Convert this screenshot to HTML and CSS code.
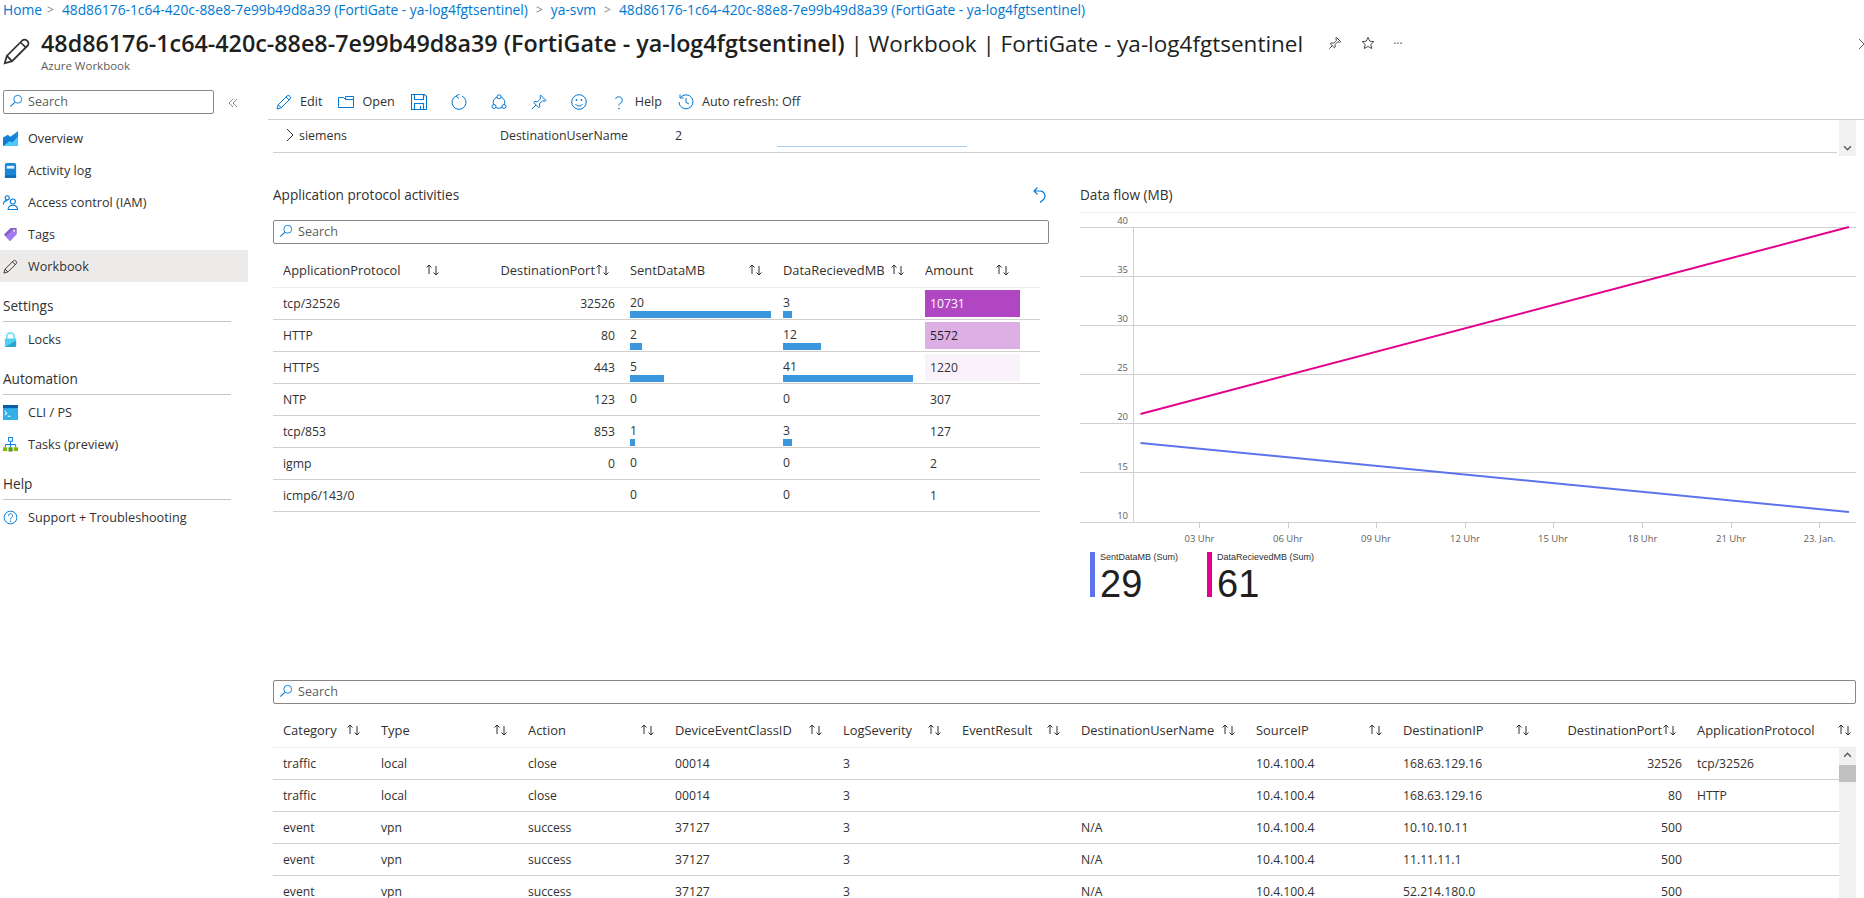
FILE: index.html
```html
<!DOCTYPE html>
<html lang="en">
<head>
  <meta charset="UTF-8">
  <meta name="viewport" content="width=device-width, initial-scale=1.0">
  <title>Workbook | FortiGate - ya-log4fgtsentinel</title>
  <link rel="stylesheet" href="styles.css">
</head>
<body>
  <svg class="sprite" aria-hidden="true">
    <symbol id="sort" viewBox="0 0 16 12"><path d="M4 10V1M1.5 3.5 4 1l2.5 2.5M11 2v9M8.5 8.5 11 11l2.5-2.5" fill="none" stroke="#323130"/></symbol>
    <symbol id="search" viewBox="0 0 16 16"><circle cx="10" cy="6" r="4.5" fill="none" stroke="#0078d4"/><path d="M6.500 9.500 1.500 14.500" stroke="#0078d4" stroke-width="1.200"/></symbol>
    <symbol id="pencil" viewBox="0 0 16 16"><path d="M1 15l1.200-4.200L11 2a1.800 1.800 0 0 1 2.600 0l.4.4a1.800 1.800 0 0 1 0 2.600L5.200 13.800zM2.200 10.800l3 3M10 3l3 3" fill="none" stroke="currentColor"/></symbol>
  </svg>

  <header class="page-header">
    <nav class="crumbs">
      <a class="crumb-home">Home</a><span class="crumb-sep">&gt;</span>
      <a>48d86176-1c64-420c-88e8-7e99b49d8a39 (FortiGate - ya-log4fgtsentinel)</a><span class="crumb-sep">&gt;</span>
      <a>ya-svm</a><span class="crumb-sep">&gt;</span>
      <a>48d86176-1c64-420c-88e8-7e99b49d8a39 (FortiGate - ya-log4fgtsentinel)</a>
    </nav>
    <div class="title-row">
      <svg class="title-icon"><use href="#pencil"/></svg>
      <div>
        <div class="title-line">
          <h1><b>48d86176-1c64-420c-88e8-7e99b49d8a39 (FortiGate - ya-log4fgtsentinel)</b> | Workbook | FortiGate - ya-log4fgtsentinel</h1>
          <svg class="title-action title-pin" viewBox="0 0 16 16"><path d="M9.500 1.500l5 5-1 .6-2.500-.4-3 3 .3 3-1 .8L2.700 8.900l.8-1 3 .3 3-3-.4-2.600zM5 11l-3.500 3.500" fill="none" stroke="#323130"/></svg>
          <svg class="title-action" viewBox="0 0 16 16"><path d="M8 1.500l2 4.400 4.700.5-3.500 3.200 1 4.700L8 11.900l-4.200 2.400 1-4.700L1.300 6.400 6 5.900z" fill="none" stroke="#323130"/></svg>
          <span class="title-more">···</span>
        </div>
        <div class="subtitle">Azure Workbook</div>
      </div>
      <svg class="title-close" viewBox="0 0 12 12"><path d="M1 1l10 10M1 11 11 1" stroke="#605e5c"/></svg>
    </div>
  </header>

  <div class="layout">
    <aside class="sidebar">
      <div class="search-box side-search">
        <svg class="search-icon"><use href="#search"/></svg>Search
      </div>
      <svg class="collapse" viewBox="0 0 10 10"><path d="M5 1 1 5l4 4M9 1 5 5l4 4" fill="none" stroke="#8a8886"/></svg>

      <ul class="nav">
        <li class="nav-item">
          <svg class="nav-icon" viewBox="0 0 16 16"><defs><linearGradient id="ov" x1="0" y1="0" x2="0" y2="1"><stop offset="0" stop-color="#1b93eb"/><stop offset="1" stop-color="#0a6fc4"/></linearGradient></defs><path d="M0 16V7l5-3 3 2 8-6v16z" fill="url(#ov)"/><path d="M0 16l7-5 3 1 6-6v10z" fill="#50c7f5"/></svg>
          Overview
        </li>
        <li class="nav-item">
          <svg class="nav-icon" viewBox="0 0 16 16"><rect x="2" y="0" width="12" height="16" rx="2" fill="#1a85d6"/><rect x="4" y="3" width="8" height="3" fill="#e8f4fd"/><rect x="2" y="13" width="12" height="3" rx="1" fill="#0f6cb8"/></svg>
          Activity log
        </li>
        <li class="nav-item">
          <svg class="nav-icon" viewBox="0 0 16 16"><g fill="none" stroke="#0078d4" stroke-width="1.100"><circle cx="4.500" cy="3" r="2.200"/><path d="M.5 10c0-3 1.500-4 4-4"/><circle cx="10.500" cy="7" r="2.700"/><path d="M5.500 15.500c0-3 2-4.500 5-4.500s5 1.500 5 4.500z"/></g></svg>
          Access control (IAM)
        </li>
        <li class="nav-item">
          <svg class="nav-icon" viewBox="0 0 16 16"><path d="M1 8l7-7h6.500v6.500l-7 7.500z" fill="#8661c5"/><path d="M3 10l9-8.500 2.500 6-7 7.500z" fill="#a67af4"/><circle cx="12" cy="4" r="1" fill="#fff"/></svg>
          Tags
        </li>
        <li class="nav-item is-active">
          <svg class="nav-icon nav-pencil"><use href="#pencil"/></svg>
          Workbook
        </li>
      </ul>

      <h2 class="nav-heading">Settings</h2>
      <ul class="nav">
        <li class="nav-item">
          <svg class="nav-icon" viewBox="0 0 16 16"><path d="M4 8V5a4 4 0 0 1 8 0v3" fill="none" stroke="#7fe0fa" stroke-width="2"/><rect x="2" y="7" width="12" height="9" rx="1" fill="#50d0f5"/><path d="M2 16l12-7v6a1 1 0 0 1-1 1z" fill="#2aa5cf"/></svg>
          Locks
        </li>
      </ul>

      <h2 class="nav-heading">Automation</h2>
      <ul class="nav">
        <li class="nav-item">
          <svg class="nav-icon" viewBox="0 0 16 12" preserveAspectRatio="none"><rect width="16" height="12" fill="#32b0e7"/><rect width="16" height="2.500" fill="#0a5ea8"/><path d="M2 5l2 1.500L2 8M5 9h3" fill="none" stroke="#fff" stroke-width=".9"/></svg>
          CLI / PS
        </li>
        <li class="nav-item">
          <svg class="nav-icon" viewBox="0 0 16 16"><rect x="6" y=".5" width="4" height="4" fill="#fff" stroke="#0078d4"/><path d="M8 4.500V8M2.500 11V8h11v3M8 8v3" fill="none" stroke="#0078d4"/><rect x="0" y="11" width="4.500" height="4" fill="#7fba00"/><rect x="5.800" y="11" width="4.500" height="4.500" fill="#5e9624"/><rect x="11.500" y="11" width="4.500" height="4" fill="#7fba00"/></svg>
          Tasks (preview)
        </li>
      </ul>

      <h2 class="nav-heading">Help</h2>
      <ul class="nav">
        <li class="nav-item">
          <svg class="nav-icon" viewBox="0 0 16 16"><circle cx="8" cy="8" r="6.800" fill="none" stroke="#0078d4"/><path d="M5.800 6.200a2.200 2.200 0 1 1 3.400 1.800c-.8.500-1.200 1-1.200 2" fill="none" stroke="#0078d4"/><circle cx="8" cy="12" r=".7" fill="#0078d4"/></svg>
          Support + Troubleshooting
        </li>
      </ul>
    </aside>

    <main class="main">
      <div class="toolbar">
        <span class="tool"><svg class="tool-icon"><use href="#pencil"/></svg>Edit</span>
        <span class="tool"><svg class="tool-icon" viewBox="0 0 16 16"><path d="M.5 13.500v-10h5l2 2H15.500v8zM7.500 5.500V2.500h8v3" fill="none" stroke="#0078d4"/></svg>Open</span>
        <span class="tool tool-only"><svg class="tool-icon" viewBox="0 0 16 16"><path d="M.5.500h13l2 2v13H.5zM3.500.5v5h9v-5M3.500 15.500v-6h9v6M9.500 12v3.500" fill="none" stroke="#0078d4" stroke-width="1.100"/></svg></span>
        <span class="tool tool-only"><svg class="tool-icon" viewBox="0 0 16 16"><path d="M5 2a7 7 0 1 0 6 0M8.500 0 5 2l3 2.500" fill="none" stroke="#0078d4"/></svg></span>
        <span class="tool tool-only"><svg class="tool-icon" viewBox="0 0 16 16"><g fill="none" stroke="#0078d4"><circle cx="8" cy="8.500" r="5.800"/><circle cx="8" cy="2.800" r="2" fill="#fff"/><circle cx="3" cy="12.500" r="2" fill="#fff"/><circle cx="13" cy="12.500" r="2" fill="#fff"/></g></svg></span>
        <span class="tool tool-only"><svg class="tool-icon" viewBox="0 0 16 16"><path d="M9.500 1l5.500 5.500-1 .7-2.500-.4-3 3 .3 3-1 .8L2.700 8.500l.8-1 3 .3 3-3-.4-2.600zM5 11l-4 4" fill="none" stroke="#0078d4"/></svg></span>
        <span class="tool tool-only"><svg class="tool-icon" viewBox="0 0 16 16"><circle cx="8" cy="8" r="7.300" fill="none" stroke="#0078d4"/><circle cx="5.500" cy="6" r=".9" fill="#0078d4"/><circle cx="10.500" cy="6" r=".9" fill="#0078d4"/><path d="M4.500 10a4 4 0 0 0 7 0" fill="none" stroke="#0078d4"/></svg></span>
        <span class="tool"><svg class="tool-icon" viewBox="0 0 16 16"><path d="M4.500 5a3.500 3.500 0 1 1 4.500 4.500c-.7.300-1 .8-1 2" fill="none" stroke="#0078d4"/><circle cx="8" cy="14.500" r=".8" fill="#0078d4"/></svg>Help</span>
        <span class="tool"><svg class="tool-icon" viewBox="0 0 16 16"><path d="M2.500 3.500A7 7 0 1 1 1 8M2 .5v3.500h3.500M8 4v4.500l3 1.500" fill="none" stroke="#0078d4"/></svg>Auto refresh: Off</span>
      </div>

      <div class="content">
        <div class="group-strip">
          <div class="group-row">
            <span class="group-name"><svg class="chevron" viewBox="0 0 8 14"><path d="M1 1l6 6-6 6" fill="none" stroke="#323130"/></svg>siemens</span>
            <span>DestinationUserName</span>
            <span>2</span>
            <span class="group-bar"></span>
          </div>
          <div class="strip-scroll"><svg class="scroll-arrow" viewBox="0 0 8 5"><path d="M1 1l3 3 3-3" fill="none" stroke="#605e5c" stroke-width="1.400"/></svg></div>
        </div>

        <div class="panels">
          <section class="panel">
            <div class="panel-title">
              <h3>Application protocol activities</h3>
              <svg class="undo" viewBox="0 0 14 17"><path d="M1 5h6.500a5 5 0 0 1 3 8.500L7 16.500M4.500 1.500 1 5l3.500 3.500" fill="none" stroke="#0078d4" stroke-width="1.100"/></svg>
            </div>
            <div class="search-box"><svg class="search-icon"><use href="#search"/></svg>Search</div>

            <div class="grid-row protocol-cols grid-head">
              <span class="th">ApplicationProtocol<svg class="sort"><use href="#sort"/></svg></span>
              <span class="th th-end">DestinationPort<svg class="sort"><use href="#sort"/></svg></span>
              <span class="th">SentDataMB<svg class="sort"><use href="#sort"/></svg></span>
              <span class="th">DataRecievedMB<svg class="sort"><use href="#sort"/></svg></span>
              <span class="th">Amount<svg class="sort"><use href="#sort"/></svg></span>
            </div>

            <div class="grid-row protocol-cols">
              <span class="td">tcp/32526</span><span class="td td-num">32526</span>
              <span class="td td-bar">20<i class="bar" style="width:141px"></i></span>
              <span class="td td-bar">3<i class="bar" style="width:9px"></i></span>
              <span class="td-heat heat-high">10731</span>
            </div>
            <div class="grid-row protocol-cols">
              <span class="td">HTTP</span><span class="td td-num">80</span>
              <span class="td td-bar">2<i class="bar" style="width:12px"></i></span>
              <span class="td td-bar">12<i class="bar" style="width:38px"></i></span>
              <span class="td-heat heat-mid">5572</span>
            </div>
            <div class="grid-row protocol-cols">
              <span class="td">HTTPS</span><span class="td td-num">443</span>
              <span class="td td-bar">5<i class="bar" style="width:34px"></i></span>
              <span class="td td-bar">41<i class="bar" style="width:130px"></i></span>
              <span class="td-heat heat-low">1220</span>
            </div>
            <div class="grid-row protocol-cols">
              <span class="td">NTP</span><span class="td td-num">123</span>
              <span class="td td-bar">0</span><span class="td td-bar">0</span><span class="td-heat">307</span>
            </div>
            <div class="grid-row protocol-cols">
              <span class="td">tcp/853</span><span class="td td-num">853</span>
              <span class="td td-bar">1<i class="bar" style="width:5px"></i></span>
              <span class="td td-bar">3<i class="bar" style="width:9px"></i></span>
              <span class="td-heat">127</span>
            </div>
            <div class="grid-row protocol-cols">
              <span class="td">igmp</span><span class="td td-num">0</span>
              <span class="td td-bar">0</span><span class="td td-bar">0</span><span class="td-heat">2</span>
            </div>
            <div class="grid-row protocol-cols">
              <span class="td">icmp6/143/0</span><span class="td td-num"></span>
              <span class="td td-bar">0</span><span class="td td-bar">0</span><span class="td-heat">1</span>
            </div>
          </section>

          <section class="panel">
            <div class="panel-title"><h3>Data flow (MB)</h3></div>
            <svg class="chart" viewBox="0 0 776 333">
              <g class="chart-grid">
                <path class="chart-top" d="M0 .5H776"/>
                <path d="M0 15.500H776M0 64.500H776M0 113.500H776M0 162.500H776M0 211.500H776M0 260.500H776M0 310.500H776"/>
                <path class="chart-axis" d="M53.500 15V310M119.500 311v5M208.500 311v5M296.500 311v5M385.500 311v5M473.500 311v5M562.500 311v5M651.500 311v5M739.500 311v5"/>
              </g>
              <g class="chart-labels y-labels">
                <text x="48" y="12">40</text><text x="48" y="61">35</text><text x="48" y="109.500">30</text>
                <text x="48" y="159">25</text><text x="48" y="208">20</text><text x="48" y="258">15</text><text x="48" y="307">10</text>
              </g>
              <g class="chart-labels x-labels">
                <text x="119.500" y="330">03 Uhr</text><text x="208" y="330">06 Uhr</text><text x="296" y="330">09 Uhr</text><text x="385" y="330">12 Uhr</text>
                <text x="473" y="330">15 Uhr</text><text x="562.500" y="330">18 Uhr</text><text x="651" y="330">21 Uhr</text><text x="739.500" y="330">23. Jan.</text>
              </g>
              <line class="line-received" x1="60.500" y1="202" x2="769" y2="15"/>
              <line class="line-sent" x1="60.500" y1="231" x2="769" y2="300"/>
            </svg>
            <div class="legend">
              <div class="legend-item sent">
                <div class="legend-label">SentDataMB (Sum)</div>
                <div class="legend-value">29</div>
              </div>
              <div class="legend-item received">
                <div class="legend-label">DataRecievedMB (Sum)</div>
                <div class="legend-value">61</div>
              </div>
            </div>
          </section>
        </div>

        <section class="events">
          <div class="search-box"><svg class="search-icon"><use href="#search"/></svg>Search</div>
          <div class="grid-row event-cols grid-head">
            <span class="th">Category<svg class="sort"><use href="#sort"/></svg></span>
            <span class="th">Type<svg class="sort"><use href="#sort"/></svg></span>
            <span class="th">Action<svg class="sort"><use href="#sort"/></svg></span>
            <span class="th">DeviceEventClassID<svg class="sort"><use href="#sort"/></svg></span>
            <span class="th">LogSeverity<svg class="sort"><use href="#sort"/></svg></span>
            <span class="th">EventResult<svg class="sort"><use href="#sort"/></svg></span>
            <span class="th">DestinationUserName<svg class="sort"><use href="#sort"/></svg></span>
            <span class="th">SourceIP<svg class="sort"><use href="#sort"/></svg></span>
            <span class="th">DestinationIP<svg class="sort"><use href="#sort"/></svg></span>
            <span class="th th-end">DestinationPort<svg class="sort"><use href="#sort"/></svg></span>
            <span class="th th-last">ApplicationProtocol<svg class="sort"><use href="#sort"/></svg></span>
          </div>
          <div class="event-body">
            <div class="event-rows">
              <div class="grid-row event-cols">
                <span class="td">traffic</span><span class="td">local</span><span class="td">close</span><span class="td">00014</span><span class="td">3</span><span class="td"></span><span class="td"></span><span class="td">10.4.100.4</span><span class="td">168.63.129.16</span><span class="td td-num">32526</span><span class="td">tcp/32526</span>
              </div>
              <div class="grid-row event-cols">
                <span class="td">traffic</span><span class="td">local</span><span class="td">close</span><span class="td">00014</span><span class="td">3</span><span class="td"></span><span class="td"></span><span class="td">10.4.100.4</span><span class="td">168.63.129.16</span><span class="td td-num">80</span><span class="td">HTTP</span>
              </div>
              <div class="grid-row event-cols">
                <span class="td">event</span><span class="td">vpn</span><span class="td">success</span><span class="td">37127</span><span class="td">3</span><span class="td"></span><span class="td">N/A</span><span class="td">10.4.100.4</span><span class="td">10.10.10.11</span><span class="td td-num">500</span><span class="td"></span>
              </div>
              <div class="grid-row event-cols">
                <span class="td">event</span><span class="td">vpn</span><span class="td">success</span><span class="td">37127</span><span class="td">3</span><span class="td"></span><span class="td">N/A</span><span class="td">10.4.100.4</span><span class="td">11.11.11.1</span><span class="td td-num">500</span><span class="td"></span>
              </div>
              <div class="grid-row event-cols">
                <span class="td">event</span><span class="td">vpn</span><span class="td">success</span><span class="td">37127</span><span class="td">3</span><span class="td"></span><span class="td">N/A</span><span class="td">10.4.100.4</span><span class="td">52.214.180.0</span><span class="td td-num">500</span><span class="td"></span>
              </div>
            </div>
            <div class="event-scroll">
              <svg class="scroll-arrow" viewBox="0 0 8 5"><path d="M1 4l3-3 3 3" fill="none" stroke="#605e5c" stroke-width="1.400"/></svg>
              <div class="scroll-thumb"></div>
            </div>
          </div>
        </section>
      </div>
    </main>
  </div>
</body>
</html>
```

FILE: styles.css
```css
* {
  box-sizing: border-box;
}
html, body {
  height: 100%;
}
body {
  margin: 0;
  overflow: hidden;
  font-family: "Open Sans", "Noto Sans", Arial, sans-serif;
  font-size: 12.2px;
  color: #323130;
  background: #fff;
}
.sprite {
  display: none;
}
h1, h2, h3, ul {
  margin: 0;
  padding: 0;
  font-weight: normal;
}
ul {
  list-style: none;
}

/* header */
.page-header {
  height: 80px;
}
.crumbs {
  display: flex;
  align-items: center;
  height: 18px;
  padding-left: 3px;
  font-size: 13.8px;
  color: #0078d4;
  white-space: nowrap;
}
.crumb-home {
  margin-right: -3px;
}
.crumb-sep {
  margin: 0 8px;
  font-size: 12px;
  color: #8a8886;
}
.title-row {
  position: relative;
  display: flex;
  padding: 11px 0 0 3px;
}
.title-icon {
  width: 28px;
  height: 28px;
  margin: 8px 10px 0 0;
  color: #323130;
}
.title-line {
  display: flex;
  align-items: center;
  height: 28px;
  white-space: nowrap;
}
h1 {
  font-size: 22.5px;
  line-height: 28px;
  color: #201f1e;
}
h1 b {
  font-size: 23.3px;
  font-weight: 600;
}
.title-action {
  width: 14px;
  height: 14px;
  margin-left: 19px;
}
.title-action.title-pin {
  margin-left: 25px;
}
.title-more {
  margin-left: 18px;
  color: #605e5c;
  font-size: 12px;
}
.subtitle {
  margin-top: 1px;
  font-size: 11.5px;
  line-height: 16px;
  color: #605e5c;
}
.title-close {
  position: absolute;
  top: 20px;
  left: 1858px;
  width: 12px;
  height: 12px;
}

.layout {
  display: flex;
  height: 818px;
}

/* sidebar */
.sidebar {
  position: relative;
  flex: 0 0 248px;
}
.search-box {
  display: flex;
  align-items: center;
  height: 24px;
  padding: 0 0 2px 5px;
  border: 1px solid #8a8886;
  border-radius: 2px;
  font-size: 12.6px;
  color: #605e5c;
}
.search-icon {
  width: 14px;
  height: 14px;
  margin-right: 5px;
}
.side-search {
  width: 211px;
  margin: 10px 0 8px 3px;
}
.collapse {
  position: absolute;
  top: 18px;
  left: 228px;
  width: 10px;
  height: 10px;
}
.nav-item {
  display: flex;
  align-items: center;
  height: 32px;
  padding-left: 3px;
  font-size: 12.7px;
}
.nav-item.is-active {
  background: #edebe9;
}
.nav-icon {
  flex: none;
  width: 15px;
  height: 15px;
  margin-right: 10px;
}
.nav-pencil {
  color: #323130;
}
.nav-heading {
  height: 25px;
  width: 228px;
  margin: 15px 0 1px 3px;
  border-bottom: 1px solid #c8c6c4;
  font-size: 13.6px;
  font-weight: 500;
  line-height: 18px;
}

/* toolbar */
.main {
  flex: 1;
  min-width: 0;
}
.toolbar {
  display: flex;
  align-items: center;
  height: 40px;
  margin-left: 20px;
  padding-top: 4px;
  border-bottom: 1px solid #d2d0ce;
  font-size: 12.6px;
}
.tool {
  display: flex;
  align-items: center;
  padding: 0 8px;
  white-space: nowrap;
}
.tool-only {
  width: 40px;
}
.tool-icon {
  width: 16px;
  height: 16px;
  margin-right: 8px;
  color: #0078d4;
}
.tool-only .tool-icon {
  margin-right: 0;
}

/* main content */
.content {
  padding: 0 8px 0 25px;
}
.group-strip {
  position: relative;
  height: 33px;
}
.group-row {
  display: grid;
  grid-template-columns: 227px 175px 102px 190px;
  align-items: center;
  width: 1564px;
  height: 33px;
  padding-bottom: 2px;
  border-bottom: 1px solid #d2d0ce;
  font-size: 12.4px;
}
.group-name {
  display: flex;
  align-items: center;
  padding-left: 13px;
}
.chevron {
  width: 8px;
  height: 14px;
  margin-right: 5px;
}
.group-bar {
  align-self: end;
  height: 1px;
  margin-bottom: 3px;
  background: #a9cdea;
}
.strip-scroll {
  position: absolute;
  top: 0;
  right: 0;
  width: 17px;
  height: 36px;
  background: #f1f1f1;
  text-align: center;
}
.scroll-arrow {
  display: block;
  width: 9px;
  height: 6px;
  margin: 0 auto;
}
.strip-scroll .scroll-arrow {
  margin-top: 25px;
}

.panels {
  display: flex;
  gap: 31px;
}
.panel {
  flex: 0 0 776px;
}
.panel-title {
  display: flex;
  justify-content: space-between;
  align-items: center;
  height: 18px;
  margin: 32px 0 17px;
  padding-right: 2px;
}
.panel-title h3 {
  font-size: 13.6px;
  font-weight: 500;
}
.undo {
  width: 14px;
  height: 17px;
}
.panel:last-child .panel-title {
  margin-bottom: 9px;
}

/* tables */
.grid-row {
  display: grid;
  align-items: center;
  height: 32px;
  border-bottom: 1px solid #d2d0ce;
  white-space: nowrap;
}
.grid-head {
  height: 34px;
  margin-top: 10px;
  border-bottom-color: #edebe9;
}
.protocol-cols {
  grid-template-columns: 177px 170px 153px 142px 105px 20px;
  width: 767px;
}
.event-cols {
  grid-template-columns: 98px 147px 147px 168px 119px 119px 175px 147px 147px 147px 169px;
  width: 1583px;
}
.th {
  display: flex;
  justify-content: space-between;
  align-items: center;
  padding: 0 9px 2px 10px;
  font-size: 12.9px;
}
.th-end {
  justify-content: flex-end;
}
.th-last {
  padding-right: 3px;
}
.sort {
  flex: none;
  width: 16px;
  height: 12px;
}
.td {
  position: relative;
  padding: 0 10px;
}
.td-num {
  padding: 0 5px 0 0;
  text-align: right;
}
.td-bar {
  align-self: stretch;
  line-height: 30px;
}
.bar {
  position: absolute;
  left: 10px;
  bottom: 1px;
  height: 7px;
  background: #3a96dd;
}
.td-heat {
  align-self: stretch;
  margin: 2px 0 2px 10px;
  padding-left: 5px;
  line-height: 27px;
}
.heat-high {
  background: #b146c2;
  color: #fff;
}
.heat-mid {
  background: #deafe5;
  color: #201f1e;
}
.heat-low {
  background: #f9f2fb;
}

/* chart */
.chart {
  display: block;
  width: 776px;
  height: 333px;
}
.chart-grid path {
  fill: none;
  stroke: #d2d0ce;
}
.chart-grid .chart-top {
  stroke: #edebe9;
}
.chart-labels text {
  font-size: 9.5px;
  fill: #605e5c;
}
.y-labels text {
  text-anchor: end;
}
.x-labels text {
  text-anchor: middle;
}
.line-received {
  stroke: #e3008c;
  stroke-width: 2;
}
.line-sent {
  stroke: #5c73ec;
  stroke-width: 2;
}
.legend {
  display: flex;
  margin: 7px 0 0 10px;
}
.legend-item {
  height: 45px;
  padding-left: 5px;
  border-left: 5px solid;
}
.legend-item.sent {
  width: 117px;
  border-color: #5c73ec;
}
.legend-item.received {
  border-color: #e3008c;
}
.legend-label {
  font-family: "Liberation Sans", Arial, sans-serif;
  font-size: 9px;
  line-height: 10px;
}
.legend-value {
  font-family: "Liberation Sans", Arial, sans-serif;
  font-size: 38px;
  line-height: 45px;
  color: #201f1e;
}

/* events table */
.events {
  margin-top: 83px;
}
.event-body {
  display: flex;
  width: 1583px;
}
.event-rows {
  flex: 0 0 1566px;
  overflow: hidden;
}
.event-scroll {
  flex: 0 0 17px;
  height: 170px;
  padding-top: 4px;
  background: #f1f1f1;
}
.scroll-thumb {
  height: 17px;
  margin-top: 7px;
  background: #c1c1c1;
}
```
